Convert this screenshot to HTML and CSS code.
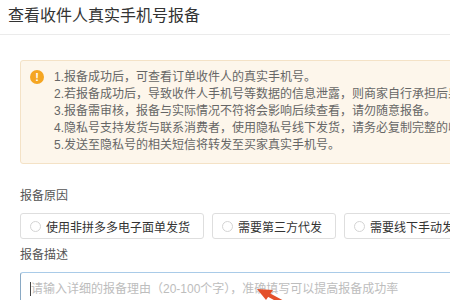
FILE: index.html
```html
<!DOCTYPE html>
<html lang="zh-CN">
<head>
<meta charset="utf-8">
<link rel="stylesheet" href="styles.css">
</head>
<body>
<div class="header">查看收件人真实手机号报备</div>
<div class="content">
  <div class="notice">
    <span class="notice-icon">!</span>
    <div class="notice-text">
      <div>1.报备成功后，可查看订单收件人的真实手机号。</div>
      <div>2.若报备成功后，导致收件人手机号等数据的信息泄露，则商家自行承担后果。</div>
      <div>3.报备需审核，报备与实际情况不符将会影响后续查看，请勿随意报备。</div>
      <div>4.隐私号支持发货与联系消费者，使用隐私号线下发货，请务必复制完整的收件人信息。</div>
      <div>5.发送至隐私号的相关短信将转发至买家真实手机号。</div>
    </div>
  </div>
  <div class="label label-reason">报备原因</div>
  <div class="radios">
    <label class="radio"><span class="dot"></span>使用非拼多多电子面单发货</label>
    <label class="radio"><span class="dot"></span>需要第三方代发</label>
    <label class="radio"><span class="dot"></span>需要线下手动发货</label>
  </div>
  <div class="label label-desc">报备描述</div>
  <div class="textarea"><span class="caret"></span><span class="placeholder">请输入详细的报备理由（20-100个字），准确填写可以提高报备成功率</span></div>
</div>
<svg class="arrow" width="60" height="30" viewBox="0 0 60 30">
  <path d="M40 24 L14 10" stroke="#e4502a" stroke-width="4" stroke-linecap="round" fill="none"/>
  <polygon points="4,5 20,6 13,16" fill="#e4502a"/>
</svg>
</body>
</html>
```
FILE: styles.css
```css
html, body {
  margin: 0;
  padding: 0;
  background: #fff;
  overflow: hidden;
  width: 450px;
  height: 300px;
}
body {
  font-family: "Liberation Sans", "Noto Sans CJK SC", sans-serif;
  color: #333;
  position: relative;
}
.header {
  height: 34px;
  line-height: 32px;
  padding-left: 8px;
  font-size: 16px;
  color: #333;
  border-bottom: 1px solid #ebebeb;
  white-space: nowrap;
}
.content {
  padding-left: 20px;
  width: 760px;
  padding-top: 25px;
}
.notice {
  display: flex;
  align-items: flex-start;
  background: #fdf6eb;
  border: 1px solid #f4e2c6;
  border-radius: 3px;
  padding: 8px 0 9px 9px;
}
.notice-icon {
  flex: none;
  width: 14px;
  height: 14px;
  border-radius: 50%;
  background: #f5a623;
  color: #fff;
  font-size: 11px;
  font-weight: bold;
  line-height: 14px;
  text-align: center;
  margin-top: 1px;
  margin-right: 10px;
}
.notice-text {
  font-size: 12px;
  line-height: 17px;
  color: #666;
  white-space: nowrap;
}
.label {
  font-size: 12px;
  line-height: 16px;
  color: #555;
}
.label-reason {
  margin-top: 24px;
}
.radios {
  display: flex;
  gap: 8px;
  margin-top: 9px;
}
.radio {
  display: flex;
  align-items: center;
  height: 24px;
  border: 1px solid #dedede;
  border-radius: 3px;
  padding: 0 13px 0 9px;
  font-size: 12px;
  color: #333;
  white-space: nowrap;
}
.dot {
  width: 9px;
  height: 9px;
  border: 1px solid #d4d4d4;
  border-radius: 50%;
  margin-right: 5px;
  background: #fff;
}
.label-desc {
  margin-top: 8px;
}
.textarea {
  margin-top: 9px;
  height: 60px;
  border: 1px solid #a9cbe8;
  border-left-color: #8aa9c4;
  border-radius: 3px;
  padding: 8px 9px;
  display: flex;
  align-items: center;
  align-self: flex-start;
  font-size: 12px;
  line-height: 16px;
  height: 16px;
  white-space: nowrap;
}
.caret {
  width: 1px;
  height: 14px;
  background: #444;
  margin-right: 0;
}
.placeholder {
  color: #bdbdbd;
}
.arrow {
  position: absolute;
  left: 253px;
  top: 284px;
}
```
